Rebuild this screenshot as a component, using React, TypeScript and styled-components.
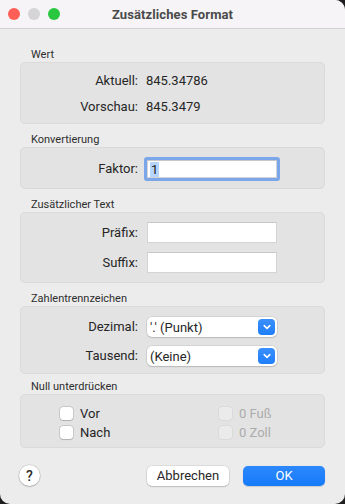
import styled, { createGlobalStyle } from 'styled-components';

const GlobalStyle = createGlobalStyle`
  html, body {
    margin: 0;
    padding: 0;
    background: #1e1e1e;
  }
  body {
    font-family: Roboto, "Liberation Sans", sans-serif;
    -webkit-font-smoothing: antialiased;
  }
`;

interface FieldRow {
  label: string;
  value?: string;
}

const werte: FieldRow[] = [
  { label: 'Aktuell:', value: '845.34786' },
  { label: 'Vorschau:', value: '845.3479' }
];

const separators: FieldRow[] = [
  { label: 'Dezimal:', value: "'.' (Punkt)" },
  { label: 'Tausend:', value: '(Keine)' }
];

const ChevronDown = () => (
  <svg width="8" height="6" viewBox="0 0 8 6">
    <path d="M1.2 1.6 L4 4.3 L6.8 1.6" fill="none" stroke="#fff" strokeWidth="1.6" strokeLinecap="round" strokeLinejoin="round" />
  </svg>
);

const App = () => {
  return (
    <>
      <GlobalStyle />
      <Window>
        <TitleBar>
          <Lights>
            <Light color="#fe5f57" />
            <Light color="#d5d4d6" />
            <Light color="#29c740" />
          </Lights>
          <Title>Zusätzliches Format</Title>
        </TitleBar>

        <Body>
          <Section space={19}>
            <GroupTitle>Wert</GroupTitle>
            <Group h={62} pad="9px 0 0" gap={8}>
              {werte.map((row) => (
                <Row key={row.label}>
                  <Label>{row.label}</Label>
                  <Value>{row.value}</Value>
                </Row>
              ))}
            </Group>
          </Section>

          <Section space={9}>
            <GroupTitle>Konvertierung</GroupTitle>
            <Group h={42} pad="12px 0 0" gap={0}>
              <Row>
                <Label>Faktor:</Label>
                <TextField focused>
                  <Selected>1</Selected>
                </TextField>
              </Row>
            </Group>
          </Section>

          <Section space={9}>
            <GroupTitle>Zusätzlicher Text</GroupTitle>
            <Group h={71} pad="9px 0 0" gap={9}>
              <Row>
                <Label>Präfix:</Label>
                <TextField />
              </Row>
              <Row>
                <Label>Suffix:</Label>
                <TextField />
              </Row>
            </Group>
          </Section>

          <Section space={9}>
            <GroupTitle>Zahlentrennzeichen</GroupTitle>
            <Group h={68} pad="10px 0 0" gap={9}>
              {separators.map((row) => (
                <Row key={row.label}>
                  <Label>{row.label}</Label>
                  <Select>
                    <span>{row.value}</span>
                    <SelectArrow>
                      <ChevronDown />
                    </SelectArrow>
                  </Select>
                </Row>
              ))}
            </Group>
          </Section>

          <Section space={6}>
            <GroupTitle>Null unterdrücken</GroupTitle>
            <Group h={54} pad="9px 0 0" gap={1}>
              <CheckGrid>
                <Check>
                  <Box />
                  Vor
                </Check>
                <Check disabled>
                  <Box disabled />
                  0 Fuß
                </Check>
                <Check>
                  <Box />
                  Nach
                </Check>
                <Check disabled>
                  <Box disabled />
                  0 Zoll
                </Check>
              </CheckGrid>
            </Group>
          </Section>

          <Footer>
            <HelpButton>?</HelpButton>
            <Spacer />
            <Button>Abbrechen</Button>
            <Button primary>OK</Button>
          </Footer>
        </Body>
      </Window>
    </>
  );
};

export default App;

const Window = styled.div`
  width: 345px;
  height: 504px;
  background: #ececec;
  border-radius: 0 10px 10px 10px;
  overflow: hidden;
  display: flex;
  flex-direction: column;
`;

const TitleBar = styled.div`
  box-sizing: border-box;
  height: 29px;
  flex-shrink: 0;
  background: #f6f4f6;
  border-bottom: 1px solid #d3d2d3;
  display: flex;
  align-items: center;
  justify-content: center;
  position: relative;
`;

const Lights = styled.div`
  position: absolute;
  left: 8px;
  top: 8px;
  display: flex;
  gap: 8px;
`;

const Light = styled.div<{ color: string }>`
  width: 12px;
  height: 12px;
  border-radius: 50%;
  background: ${({ color }) => color};
`;

const Title = styled.div`
  font-size: 13px;
  font-weight: 700;
  color: #4a4a4a;
  letter-spacing: 0.1px;
`;

const Body = styled.div`
  padding: 0 20px;
  display: flex;
  flex-direction: column;
`;

const Section = styled.div<{ space: number }>`
  display: flex;
  flex-direction: column;
  margin-top: ${({ space }) => space}px;
`;

const GroupTitle = styled.div`
  height: 14px;
  line-height: 14px;
  font-size: 11px;
  color: #2e2e2e;
  padding-left: 11px;
`;

const Group = styled.div<{ h: number; pad: string; gap: number }>`
  box-sizing: border-box;
  height: ${({ h }) => h}px;
  background: #e3e3e3;
  border: 1px solid #dadada;
  border-radius: 5px;
  padding: ${({ pad }) => pad};
  display: flex;
  flex-direction: column;
  gap: ${({ gap }) => gap}px;
`;

const Row = styled.div`
  display: grid;
  grid-template-columns: 117px 131px;
  column-gap: 8px;
  align-items: center;
`;

const Label = styled.div`
  text-align: right;
  font-size: 13px;
  line-height: 18px;
  color: #262626;
`;

const Value = styled.div`
  font-size: 13px;
  line-height: 18px;
  color: #262626;
`;

const TextField = styled.div<{ focused?: boolean }>`
  box-sizing: border-box;
  height: ${({ focused }) => (focused ? '18px' : '21px')};
  margin-left: 1px;
  background: #fff;
  border: 1px solid #d4d4d4;
  border-top-color: #c8c8c8;
  display: flex;
  align-items: center;
  padding-left: 2px;
  font-size: 13px;
  color: #1e1e1e;
  box-shadow: ${({ focused }) =>
    focused ? '0 0 0 3px rgba(105, 155, 235, 0.85)' : 'none'};
  border-radius: ${({ focused }) => (focused ? '1px' : '0')};
`;

const Selected = styled.span`
  background: #b5d5fb;
  line-height: 15px;
  padding: 0 1px;
`;

const Select = styled.div`
  box-sizing: border-box;
  height: 20px;
  margin-left: 1px;
  background: #fff;
  border-radius: 5px;
  box-shadow: 0 0 0 0.5px rgba(0, 0, 0, 0.14), 0 1px 1.5px rgba(0, 0, 0, 0.12);
  display: flex;
  align-items: center;
  justify-content: space-between;
  padding: 0 2px 0 3px;
  font-size: 13px;
  color: #262626;
`;

const SelectArrow = styled.div`
  width: 17px;
  height: 16px;
  border-radius: 4px;
  background: linear-gradient(#3a8ffc, #1f7ef9);
  display: flex;
  align-items: center;
  justify-content: center;
`;

const CheckGrid = styled.div`
  display: grid;
  grid-template-columns: 159px 1fr;
  row-gap: 1px;
  padding-left: 39px;
`;

const Check = styled.label<{ disabled?: boolean }>`
  display: flex;
  align-items: center;
  gap: 7px;
  height: 18px;
  font-size: 13px;
  color: ${({ disabled }) => (disabled ? '#acacac' : '#262626')};
`;

const Box = styled.span<{ disabled?: boolean }>`
  box-sizing: border-box;
  width: 13px;
  height: 13px;
  border-radius: 3px;
  background: ${({ disabled }) => (disabled ? '#ebebeb' : '#fff')};
  box-shadow: ${({ disabled }) =>
    disabled
      ? '0 0 0 0.5px rgba(0, 0, 0, 0.08)'
      : '0 0 0 0.5px rgba(0, 0, 0, 0.22), 0 0.5px 1px rgba(0, 0, 0, 0.12)'};
`;

const Footer = styled.div`
  margin-top: 17px;
  margin-left: -1px;
  display: flex;
  align-items: center;
  gap: 14px;
`;

const HelpButton = styled.div`
  width: 21px;
  height: 21px;
  border-radius: 50%;
  background: #fff;
  box-shadow: 0 0 0 0.5px rgba(0, 0, 0, 0.16), 0 1px 1.5px rgba(0, 0, 0, 0.18);
  display: flex;
  align-items: center;
  justify-content: center;
  font-size: 14px;
  font-weight: 500;
  color: #2a2a2a;
`;

const Spacer = styled.div`
  flex: 1;
`;

const Button = styled.div<{ primary?: boolean }>`
  width: 82px;
  height: 20px;
  border-radius: 5px;
  display: flex;
  align-items: center;
  justify-content: center;
  font-size: 13px;
  color: ${({ primary }) => (primary ? '#fff' : '#262626')};
  background: ${({ primary }) =>
    primary ? 'linear-gradient(#2d88fc, #157af9)' : '#fff'};
  box-shadow: ${({ primary }) =>
    primary
      ? '0 0.5px 1px rgba(0, 0, 0, 0.15)'
      : '0 0 0 0.5px rgba(0, 0, 0, 0.14), 0 1px 1.5px rgba(0, 0, 0, 0.14)'};
`;
